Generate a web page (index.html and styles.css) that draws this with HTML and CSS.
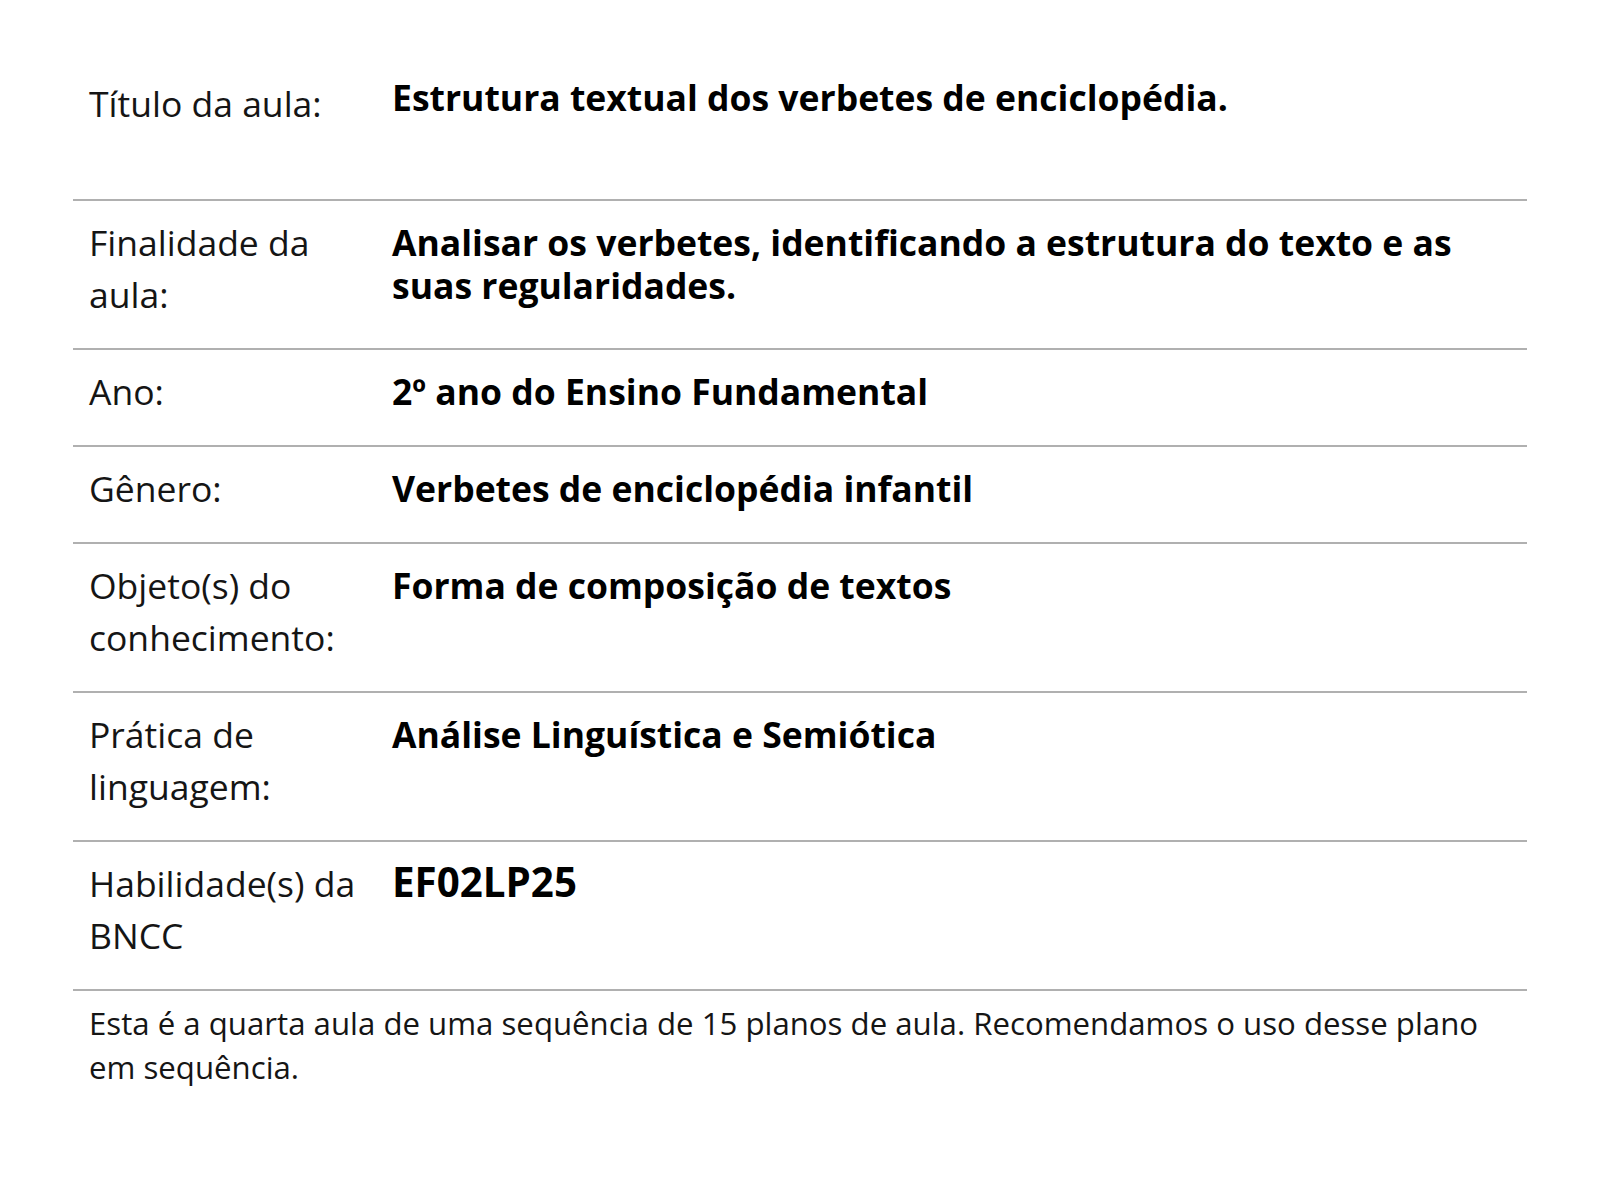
FILE: index.html
```html
<!DOCTYPE html>
<html lang="pt-BR">
<head>
<meta charset="utf-8">
<title>Plano de aula</title>
<link rel="stylesheet" href="styles.css">
</head>
<body>
<div class="sheet">
  <div class="row row-first">
    <div class="label">Título da aula:</div>
    <div class="value">Estrutura textual dos verbetes de enciclopédia.</div>
  </div>
  <div class="row">
    <div class="label">Finalidade da aula:</div>
    <div class="value">Analisar os verbetes, identificando a estrutura do texto e as suas regularidades.</div>
  </div>
  <div class="row">
    <div class="label">Ano:</div>
    <div class="value">2º ano do Ensino Fundamental</div>
  </div>
  <div class="row">
    <div class="label">Gênero:</div>
    <div class="value">Verbetes de enciclopédia infantil</div>
  </div>
  <div class="row">
    <div class="label">Objeto(s) do conhecimento:</div>
    <div class="value">Forma de composição de textos</div>
  </div>
  <div class="row">
    <div class="label">Prática de linguagem:</div>
    <div class="value">Análise Linguística e Semiótica</div>
  </div>
  <div class="row">
    <div class="label">Habilidade(s) da BNCC</div>
    <div class="value value-code">EF02LP25</div>
  </div>
  <p class="note">Esta é a quarta aula de uma sequência de 15 planos de aula. Recomendamos o uso desse plano em sequência.</p>
</div>
</body>
</html>
```
FILE: styles.css
```css
* { box-sizing: border-box; }
html, body { margin: 0; padding: 0; background: #fff; }
body {
  font-family: "Open Sans", "Noto Sans", sans-serif;
  color: #111;
}
.sheet {
  margin-left: 73px;
  width: 1454px;
}
.row {
  display: flex;
  align-items: baseline;
  border-bottom: 2px solid #b0b0b0;
  padding: 15px 16px 28px 16px;
}
.row-first {
  padding-top: 77px;
  padding-bottom: 70px;
}
.row-first .value { position: relative; top: -6px; }
.label {
  flex: 0 0 303px;
  width: 303px;
  padding-right: 20px;
  font-size: 35.5px;
  line-height: 52px;
  font-weight: 400;
  color: #151515;
}
.value {
  flex: 1 1 auto;
  font-size: 35.5px;
  line-height: 43px;
  font-weight: 700;
  color: #000;
}
.value-code {
  font-size: 40.3px;
}
.note {
  margin: 0;
  padding: 10px 16px 0 16px;
  font-size: 31.2px;
  line-height: 44px;
  color: #151515;
}
```
